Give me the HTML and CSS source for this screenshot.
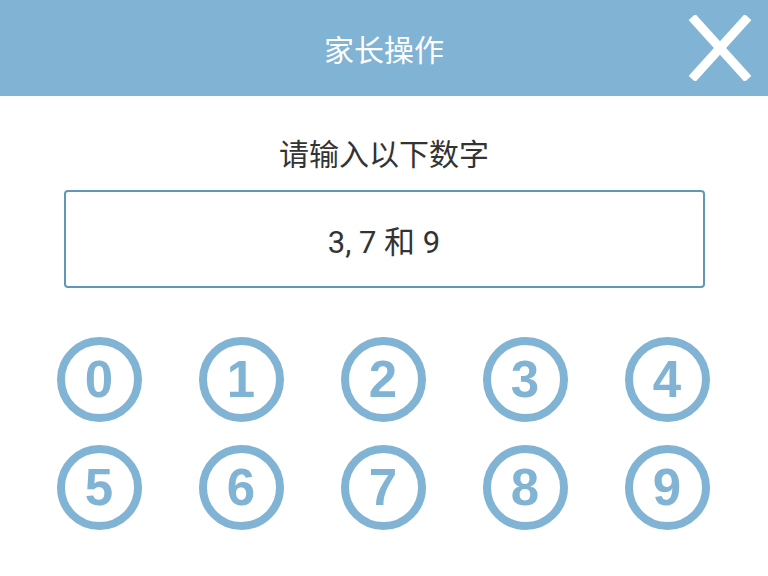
FILE: index.html
```html
<!DOCTYPE html>
<html lang="zh-CN">
<head>
<meta charset="utf-8">
<title>家长操作</title>
<link rel="stylesheet" href="styles.css">
</head>
<body>
<div class="page">
  <header class="header">
    <div class="spacer"></div>
    <h1 class="title">家长操作</h1>
    <button class="close" aria-label="关闭">
      <svg width="62" height="66" viewBox="0 0 62 66">
        <line x1="3" y1="2" x2="59" y2="64" stroke="#ffffff" stroke-width="9"/>
        <line x1="59" y1="2" x2="3" y2="64" stroke="#ffffff" stroke-width="9"/>
      </svg>
    </button>
  </header>
  <main class="content">
    <p class="prompt">请输入以下数字</p>
    <div class="answer">3, 7 和 9</div>
    <div class="keypad">
      <button class="key">0</button>
      <button class="key">1</button>
      <button class="key">2</button>
      <button class="key">3</button>
      <button class="key">4</button>
      <button class="key">5</button>
      <button class="key">6</button>
      <button class="key">7</button>
      <button class="key">8</button>
      <button class="key">9</button>
    </div>
  </main>
</div>
</body>
</html>
```

FILE: styles.css
```css
* { box-sizing: border-box; }
html, body {
  margin: 0;
  padding: 0;
  background: #ffffff;
  width: 768px;
  height: 576px;
  overflow: hidden;
}
.page {
  font-family: "Noto Sans CJK SC", "Noto Sans", sans-serif;
  width: 768px;
  height: 576px;
}
.header {
  height: 96px;
  background: #81b3d5;
  display: grid;
  grid-template-columns: 1fr auto 1fr;
  align-items: center;
}
.title {
  margin: 0;
  color: #ffffff;
  font-weight: 400;
  font-size: 30px;
  line-height: 40px;
}
.close {
  justify-self: end;
  margin: 0 17px 0 0;
  padding: 0;
  border: 0;
  background: transparent;
  width: 62px;
  height: 66px;
  display: flex;
}
.content {
  display: flex;
  flex-direction: column;
  align-items: center;
}
.prompt {
  margin: 36px 0 0;
  font-size: 30px;
  line-height: 40px;
  color: #333333;
}
.answer {
  margin-top: 18px;
  width: 641px;
  height: 98px;
  border: 2px solid #6097b9;
  border-radius: 4px;
  display: flex;
  align-items: center;
  justify-content: center;
  font-family: Roboto, "Noto Sans CJK SC", sans-serif;
  font-size: 31px;
  color: #333333;
}
.keypad {
  margin-top: 49px;
  display: grid;
  grid-template-columns: repeat(5, 85px);
  column-gap: 57px;
  row-gap: 23px;
  margin-left: -2px;
}
.key {
  width: 85px;
  height: 85px;
  border-radius: 50%;
  border: 8px solid #80b3d4;
  background: #ffffff;
  color: #80b3d4;
  font-family: "Liberation Sans", Arial, sans-serif;
  font-weight: 700;
  font-size: 51px;
  line-height: 1;
  padding: 0;
  display: flex;
  align-items: center;
  justify-content: center;
}
```
